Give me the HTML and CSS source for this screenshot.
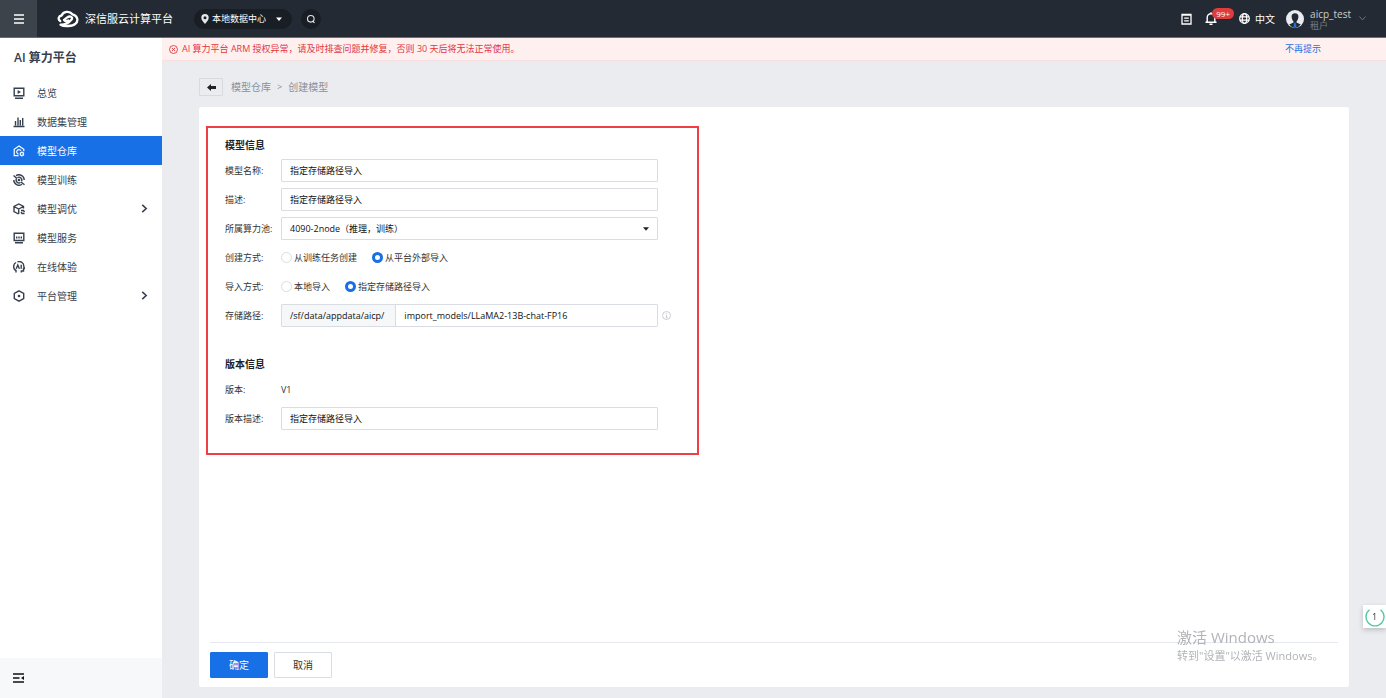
FILE: index.html
```html
<!DOCTYPE html>
<html lang="zh-CN">
<head>
<meta charset="utf-8">
<title>创建模型</title>
<link rel="stylesheet" href="styles.css">
</head>
<body>
<header class="topbar">
  <button class="menu-btn" aria-label="菜单"><svg width="12" height="10" viewBox="0 0 12 10"><path d="M1 1h10M1 5h10M1 9h10" stroke="#fff" stroke-width="1.4"/></svg></button>
  <div class="brand">
    <svg width="22" height="18" viewBox="0 0 22 18" fill="none" stroke="#fff" stroke-width="2.3" stroke-linecap="round" stroke-linejoin="round"><path d="M3.200 11C.6 9.300 1.500 6 4.600 5.500C6.100 1.300 12.500.5 15.400 4.300C20.800 5.500 21.800 11 18.300 13.800C15.600 16.400 7 16.800 3.600 14.700C8.200 14.800 12.400 12.300 14.800 9.300C16 6.800 12.800 5.700 10.600 7.200L7 9.900C7.800 11.500 9.800 11.400 11.300 10.500"/></svg>
    <span>深信服云计算平台</span>
  </div>
  <button class="pill">
    <svg width="8" height="10" viewBox="0 0 8 10"><path fill="#e4e7ea" fill-rule="evenodd" d="M4 0a3.700 3.700 0 0 1 3.700 3.700C7.700 6 5.500 8 4 10C2.500 8 .3 6 .3 3.700A3.700 3.700 0 0 1 4 0zM4 2.200a1.500 1.500 0 1 0 0 3a1.500 1.500 0 0 0 0-3z"/></svg>
    <span>本地数据中心</span>
    <svg class="caret" width="6" height="4" viewBox="0 0 6 4"><path fill="#fff" d="M0 .5h6L3 4z"/></svg>
  </button>
  <button class="search" aria-label="搜索"><svg width="10" height="10" viewBox="0 0 10 10" fill="none" stroke="#e4e7ea" stroke-width="1.100"><circle cx="4.800" cy="4.800" r="3.300"/><path d="M6.500 6.800L8.500 9"/></svg></button>
  <div class="tools">
    <button aria-label="任务"><svg width="11" height="12" viewBox="0 0 11 12" fill="none" stroke="#fff" stroke-width="1.300"><path d="M1 1.500h9v9.500H1zM1 2.200h9M3.200 5.200h4.600M3.200 7.800h4.600"/></svg></button>
    <button class="bell" aria-label="通知"><svg width="12" height="13" viewBox="0 0 12 13" fill="none" stroke="#fff" stroke-width="1.400"><path d="M.5 10.300h11M2.200 10V5.500a3.800 3.800 0 0 1 7.600 0V10M6 .3v1.500M4.500 12.200h3"/></svg><span class="badge">99+</span></button>
    <button class="lang"><svg width="11" height="11" viewBox="0 0 11 11" fill="none" stroke="#fff" stroke-width="1.200"><circle cx="5.500" cy="5.500" r="4.800"/><ellipse cx="5.500" cy="5.500" rx="2.200" ry="4.800"/><path d="M.8 3.900h9.400M.8 7.100h9.400"/></svg><span>中文</span></button>
    <button class="user">
      <svg width="18" height="18" viewBox="0 0 18 18"><circle cx="9" cy="9" r="9" fill="#e9ecf0"/><path fill="#232a33" d="M9 3.300c2.300 0 3.500 1.500 3.400 3.500C12.300 9 11.300 11 10.500 11.400v1.100l4.300 1.900A9 9 0 0 1 9 18a9 9 0 0 1-5.800-3.600l4.300-1.900v-1.100C6.700 11 5.700 9 5.600 6.800C5.500 4.800 6.700 3.300 9 3.300z"/><path fill="#1f6fe0" d="M8.200 12.800h1.600l.7 4.500L9 18l-1.500-.7z"/></svg>
      <span class="who"><span>aicp_test</span><small>租户</small></span>
      <svg width="7" height="5" viewBox="0 0 7 5" fill="none" stroke="#68707a"><path d="M.5.5l3 3.500l3-3.500"/></svg>
    </button>
  </div>
</header>
<div class="shell">
  <aside class="sidebar">
    <h1 class="side-title">AI 算力平台</h1>
    <nav class="nav">
      <a href="#"><svg viewBox="0 0 12 12"><path d="M1.200 1.200h9.600v7.600H1.200zM2 11.200h8"/><path class="solid" d="M4.600 3l3.400 2l-3.400 2z"/></svg><span>总览</span></a>
      <a href="#"><svg viewBox="0 0 12 12"><path d="M.5 10.500h11M2.500 9.500V5M5 9.500V1.500M7.300 9.500V4M9.700 9.500V2"/></svg><span>数据集管理</span></a>
      <a href="#" class="active" aria-current="page"><svg viewBox="0 0 12 12"><path d="M5.500 10.700H1.200V4.200L6 1l4.800 3.200v2M8 5.700a2.300 2.300 0 1 0-2.500 3.400"/><circle cx="8.900" cy="9" r="1.500"/><path d="M8.900 6.600v1M8.900 10.400v1.200M6.800 7.800l.9.500M10.100 9.700l1 .5M6.800 10.200l.9-.5M10.100 8.300l1-.5"/></svg><span>模型仓库</span></a>
      <a href="#"><svg viewBox="0 0 12 12"><path d="M3 1.700A5.200 5.200 0 0 1 11.200 6M9 10.300A5.200 5.200 0 0 1 .8 6M.5 1.500L4 4.500M8 8l3.500 2.700M4.500 3.600A2.900 2.900 0 0 1 8.600 7.300M7.500 8.500A2.900 2.900 0 0 1 3.400 4.800"/><circle class="solid" cx="6" cy="6" r="1.300"/></svg><span>模型训练</span></a>
      <a href="#"><svg viewBox="0 0 12 12"><path d="M5.500 11L1 8.600V3.500L5.800 1l4.700 2.500v2M1 3.500L5.700 6l4.800-2.500M5.700 6v5M8 7.500h2.500l1 1.500M11.500 10.500H9L8 9"/></svg><span>模型调优</span><svg class="arrow" viewBox="0 0 6 8"><path d="M1 .8L4.500 4L1 7.200"/></svg></a>
      <a href="#"><svg viewBox="0 0 12 12"><path d="M1.200 1.200h9.600v7.300H1.200zM2 10.800h8M3.700 4.500v2M6 4.500v2M8.300 4.500v2"/></svg><span>模型服务</span></a>
      <a href="#"><svg viewBox="0 0 12 12"><path d="M3 11.500V9.500C-.5 8 .2 3 3 1.500M4.500.8C8 0 11 2 10.800 5.500L11.500 7.500H10.500V10H8.300v1.500M3.200 7.800L4.800 4L6.400 7.800M8.200 3.800v4"/></svg><span>在线体验</span></a>
      <a href="#"><svg viewBox="0 0 12 12"><path d="M6 .8l4.700 2.600v5.200L6 11.200L1.300 8.600V3.400z"/><circle class="solid" cx="6" cy="6" r="1.300"/></svg><span>平台管理</span><svg class="arrow" viewBox="0 0 6 8"><path d="M1 .8L4.500 4L1 7.200"/></svg></a>
    </nav>
    <div class="side-foot"><button aria-label="收起菜单"><svg width="11" height="10" viewBox="0 0 11 10"><path d="M0 1h11M0 5h6.500M0 9h11" stroke="#111" stroke-width="1.400"/><path d="M11 3v4L8 5z" fill="#111"/></svg></button></div>
  </aside>
  <main class="main">
    <div class="alert" role="alert">
      <svg width="9" height="9" viewBox="0 0 9 9" fill="none" stroke="#e2373d" stroke-width=".9"><circle cx="4.500" cy="4.500" r="4"/><path d="M2.900 2.900l3.200 3.200M6.100 2.900L2.900 6.100"/></svg>
      <span>AI 算力平台 ARM 授权异常，请及时排查问题并修复，否则 30 天后将无法正常使用。</span>
      <a href="#">不再提示</a>
    </div>
    <div class="crumbs">
      <button class="back" aria-label="返回"><svg width="9" height="7" viewBox="0 0 9 7"><path fill="#222" d="M0 3.500L4 0v1.900h5v3.200H4V7z"/></svg></button>
      <a href="#">模型仓库</a><span class="sep">&gt;</span><span>创建模型</span>
    </div>
    <form class="card">
      <div class="marked">
        <section class="group">
          <h2>模型信息</h2>
          <div class="row"><label for="name">模型名称:</label><input id="name" class="field" type="text" value="指定存储路径导入"></div>
          <div class="row"><label for="desc">描述:</label><input id="desc" class="field" type="text" value="指定存储路径导入"></div>
          <div class="row"><label for="pool">所属算力池:</label><span class="select"><select id="pool" class="field"><option>4090-2node（推理，训练）</option></select><svg width="6" height="4" viewBox="0 0 6 4"><path fill="#222" d="M0 .3h6L3 3.700z"/></svg></span></div>
          <div class="row" role="radiogroup" aria-labelledby="create-label"><span class="label" id="create-label">创建方式:</span><label class="radio"><input type="radio" name="create">从训练任务创建</label><label class="radio"><input type="radio" name="create" checked>从平台外部导入</label></div>
          <div class="row" role="radiogroup" aria-labelledby="import-label"><span class="label" id="import-label">导入方式:</span><label class="radio"><input type="radio" name="import">本地导入</label><label class="radio"><input type="radio" name="import" checked>指定存储路径导入</label></div>
          <div class="row"><label for="path">存储路径:</label><span class="joined"><span class="prefix">/sf/data/appdata/aicp/</span><input id="path" type="text" value="import_models/LLaMA2-13B-chat-FP16"></span><svg class="info" width="9" height="9" viewBox="0 0 9 9" fill="none" stroke="#bcc1c8" stroke-width=".8"><circle cx="4.500" cy="4.500" r="4"/><path d="M4.500 2v1M3.700 4h.9v2.500M3.600 6.700h2"/></svg></div>
        </section>
        <section class="group">
          <h2>版本信息</h2>
          <div class="row"><span class="label">版本:</span><span>V1</span></div>
          <div class="row"><label for="vdesc">版本描述:</label><input id="vdesc" class="field" type="text" value="指定存储路径导入"></div>
        </section>
      </div>
      <div class="actions"><button type="button" class="btn primary">确定</button><button type="button" class="btn">取消</button></div>
    </form>
  </main>
</div>
<div class="watermark"><strong>激活 Windows</strong><span>转到"设置"以激活 Windows。</span></div>
<button class="float"><svg width="20" height="20" viewBox="0 0 20 20" fill="none" stroke="#52c9a0" stroke-width="1.400"><path d="M15.500 2.800A9 9 0 1 1 4.500 2.800"/></svg><span>1</span></button>
</body>
</html>
```
FILE: styles.css
```css
* { box-sizing: border-box; }
body {
  margin: 0;
  min-height: 100vh;
  display: flex;
  flex-direction: column;
  background: #ebecf0;
  color: #333;
  font: 9px/16px "Open Sans", "Noto Sans CJK SC", sans-serif;
}
button, input, select { font: inherit; color: inherit; margin: 0; }
button { border: 0; padding: 0; background: none; cursor: pointer; }
a { color: inherit; text-decoration: none; }
svg { flex: none; display: block; }
h1, h2 { margin: 0; }

.topbar { display: flex; align-items: center; height: 38px; background: #242a33; border-bottom: 1px solid #696d74; color: #fff; }
.menu-btn { width: 37px; height: 37px; display: grid; place-items: center; background: #3c434b; }
.brand { display: flex; align-items: center; gap: 6px; margin-left: 20px; font-size: 11px; white-space: nowrap; }
.pill { display: flex; align-items: center; gap: 3px; height: 20px; margin-left: 21px; padding: 0 10px 0 7px; border-radius: 10px; background: #191e25; }
.pill .caret { margin-left: 7px; }
.search { width: 20px; height: 20px; margin-left: 9px; display: grid; place-items: center; border-radius: 50%; background: #191e25; }
.tools { display: flex; align-items: center; margin-left: auto; padding-right: 20px; }
.bell { position: relative; margin-left: 13px; }
.badge { position: absolute; left: 7px; top: -4px; width: 22px; height: 11px; border-radius: 6px; background: #e03c3e; font-size: 8px; line-height: 11px; text-align: center; }
.lang { display: flex; align-items: center; gap: 5px; margin-left: 22px; font-size: 10px; }
.user { display: flex; align-items: center; gap: 6px; margin-left: 11px; text-align: left; }
.user > svg:last-child { margin-left: 2px; }
.who { display: flex; flex-direction: column; padding-top: 2px; font-size: 10px; line-height: 12px; color: #c9cdd2; }
.who small { font-size: 9px; color: #747b84; }

.shell { flex: 1; display: flex; }
.sidebar { width: 162px; flex: none; display: flex; flex-direction: column; background: #fff; color: #36404e; }
.side-title { padding: 10px 14px; font-size: 12px; line-height: 20px; font-weight: 600; }
.nav { display: flex; flex-direction: column; }
.nav a { display: flex; align-items: center; gap: 12px; height: 29px; padding: 0 14px 0 13px; font-size: 10px; }
.nav svg { width: 12px; height: 12px; fill: none; stroke: currentColor; stroke-width: 1.4; }
.nav .solid { fill: currentColor; stroke: none; }
.nav .arrow { width: 7px; height: 9px; margin-left: auto; }
.nav .active { background: #1870e6; color: #fff; }
.nav .active svg { stroke-width: 1.2; }
.side-foot { display: flex; align-items: center; height: 40px; margin-top: auto; padding-left: 13px; background: #f7f8fa; }

.main { flex: 1; min-width: 0; display: flex; flex-direction: column; }
.alert { display: flex; align-items: center; gap: 4px; height: 23px; padding: 0 65px 0 7px; background: #fff0f0; border-bottom: 1px solid #f9dfdf; color: #e2373d; }
.alert a { margin-left: auto; color: #1b6fe0; }
.crumbs { display: flex; align-items: center; gap: 6px; margin: 17px 37px 11px; color: #8b9097; font-size: 10px; }
.back { width: 24px; height: 18px; margin-right: 2px; display: grid; place-items: center; border: 1px solid #d8dade; border-radius: 1px; }
.sep { font-size: 9px; }
.card { flex: 1; display: flex; flex-direction: column; margin: 0 37px 11px; padding: 19px 11px 9px 7px; border-radius: 2px; background: #fff; }
.marked { width: 493px; max-width: 100%; padding: 9px 39px 23px 17px; border: 2px solid #ef3e44; }
.group { display: grid; gap: 6px; }
.group + .group { margin-top: 29px; }
.group h2 { font-size: 10px; line-height: 16px; font-weight: 700; color: #1d2128; }
.row { position: relative; display: flex; align-items: center; height: 23px; }
.row > label:first-child, .label { width: 56px; flex: none; white-space: nowrap; }
.field, .joined { flex: 1; min-width: 0; width: 100%; height: 23px; padding: 0 8px; border: 1px solid #d9dde3; border-radius: 1px; background: #fff; color: #111; }
.select { position: relative; flex: 1; display: flex; }
.select select { appearance: none; }
.select svg { position: absolute; right: 9px; top: 10px; pointer-events: none; }
.radio { display: flex; align-items: center; gap: 2px; margin-right: 15px; }
.radio input { appearance: none; width: 11px; height: 11px; border: 1px solid #d9dde3; border-radius: 50%; background: #fff; }
.radio input:checked { border: 3px solid #1870e6; }
.joined { display: flex; padding: 0; }
.prefix { flex: none; padding: 0 11px 0 8px; line-height: 21px; background: #f6f7f9; border-right: 1px solid #d9dde3; }
.joined input { flex: 1; min-width: 0; padding: 0 8px; border: 0; background: none; }
.info { position: absolute; left: 100%; margin-left: 4px; }
.actions { display: flex; gap: 6px; margin: auto 0 0 4px; padding-top: 9px; border-top: 1px solid #e6e8ef; }
.btn { width: 58px; height: 26px; border: 1px solid #d9dde3; border-radius: 1px; background: #fff; font-size: 10px; }
.primary { border-color: #1870e6; background: #1870e6; color: #fff; }

.watermark { position: fixed; right: 64px; bottom: 34px; width: 145px; display: flex; flex-direction: column; color: #b1b3b7; font-size: 11px; line-height: 17px; white-space: nowrap; pointer-events: none; }
.watermark strong { font-size: 15px; line-height: 19px; font-weight: 400; }
.float { position: fixed; right: 0; bottom: 70px; width: 23px; height: 23px; display: grid; place-items: center; background: #fff; box-shadow: 0 2px 5px #0003; }
.float > * { grid-area: 1 / 1; }
```
